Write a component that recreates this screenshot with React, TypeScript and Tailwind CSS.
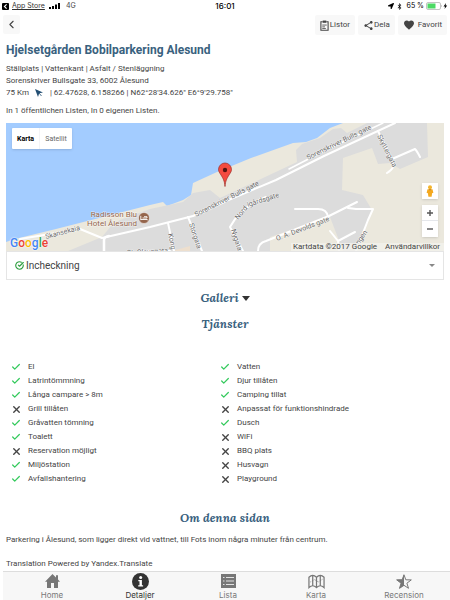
import React, { useState } from 'react';
import { FaBluetoothB, FaLocationArrow } from 'react-icons/fa';
import { MdShare, MdFavorite } from 'react-icons/md';
import { Check, X, ChevronLeft, CircleCheckBig } from 'lucide-react';

interface Service {
  name: string;
  available: boolean;
}

const leftServices: Service[] = [
  { name: 'El', available: true },
  { name: 'Latrintömmning', available: true },
  { name: 'Långa campare > 8m', available: true },
  { name: 'Grill tillåten', available: false },
  { name: 'Gråvatten tömning', available: true },
  { name: 'Toalett', available: true },
  { name: 'Reservation möjligt', available: false },
  { name: 'Miljöstation', available: true },
  { name: 'Avfallshantering', available: true },
];

const rightServices: Service[] = [
  { name: 'Vatten', available: true },
  { name: 'Djur tillåten', available: true },
  { name: 'Camping tillat', available: true },
  { name: 'Anpassat för funktionshindrade', available: false },
  { name: 'Dusch', available: true },
  { name: 'WiFi', available: false },
  { name: 'BBQ plats', available: false },
  { name: 'Husvagn', available: false },
  { name: 'Playground', available: false },
];

const StatusBar = () => (
  <div className="grid h-3 grid-cols-3 items-center px-[2px] font-['Inter',sans-serif] text-[7px] leading-3 text-black">
    <div className="flex items-center">
      <a href="#store" className="flex items-center gap-[3px]">
        <svg width="7" height="7" viewBox="0 0 7 7">
          <rect width="7" height="7" rx="1" fill="#000" />
          <path d="M4.6 1.3 2.4 3.5l2.2 2.2" fill="none" stroke="#fff" strokeWidth="1.1" />
        </svg>
        <span className="text-[#333] underline">App Store</span>
      </a>
      <svg className="ml-1" width="11" height="6" viewBox="0 0 11 6">
        <path d="M0 4h2v2H0zM3 3h2v3H3zM6 1.500h2V6H6zM9 0h2v6H9z" />
      </svg>
      <span className="ml-[6px] text-[#444]">4G</span>
    </div>
    <span className="text-center text-[8px] font-medium">16:01</span>
    <div className="flex items-center justify-end gap-[2px]">
      <FaLocationArrow size={6} />
      <FaBluetoothB size={7} />
      <span className="ml-[2px]">65 %</span>
      <svg width="22" height="8" viewBox="0 0 22 8">
        <rect x="0.5" y="0.5" width="14" height="7" rx="1.500" fill="#fff" stroke="#aaa" strokeWidth="0.7" />
        <rect x="1.500" y="1.500" width="8" height="5" fill="#4cd964" />
        <path d="M15.300 2.700v2.600c.9-.5.9-2.100 0-2.600z" fill="#aaa" />
        <path d="M20 1l-2.500 3.400h1.600L18.500 7l2.700-3.500h-1.600z" />
      </svg>
    </div>
  </div>
);

const ToolButton: React.FC<{ label: string; className?: string; children: React.ReactNode }> = ({
  label,
  className = '',
  children,
}) => (
  <button className={`flex h-5 items-center rounded-[2px] bg-[#f8f8f8] px-[5px] text-[8px] text-[#444] ${className}`}>
    {children}
    {label}
  </button>
);

const MapDrawing = () => (
  <svg className="block h-full w-full" viewBox="0 0 438 128" preserveAspectRatio="xMidYMid slice">
    <rect width="438" height="128" fill="#a3ccff" />
    <path
      d="M0 119 9 116 50 106 144 82 157 79 161 83 177 77 185 72 187 60 211 49 245 35 287 20 300 19 311 15 324 5 337 0H438V128H0z"
      fill="#ebe8dd"
    />
    <path
      d="M62 128 96 114 105 103 114 97 144 86 177 79 187 70 204 67 214 75 257 55 291 39 290 27 296 21 314 15 327 6 335 5 341 10 361 0H421L422 34 394 46 384 40 372 41 366 25 337 35 336 67 357 72 366 87 354 120 350 128H337L324 94 264 114V128z"
      fill="#dcdcdc"
    />
    <path d="M166 128 184 123v5z" fill="#eddfce" />
    <g fill="none" stroke="#fff" strokeLinecap="round" strokeLinejoin="round">
      <path d="M14 116 74 106 96 115 144 104 187 93 220 78 270 57 318 33 389 0" strokeWidth="2" />
      <path d="M283 46 320 27 377 0" strokeWidth="1.500" />
      <path d="M98 128V117q0-3 5-4" strokeWidth="2.500" />
      <path d="M162 100 168 128M182 94 196 128M260 74Q235 84 224 104L237 128M252 128q0-8 8-10L323 93 351 79M294 86h18q9 0 10 8M342 85 350 86H367L362 97 350 128M324 108 332 118 349 109M332 118 333 128" strokeWidth="2" />
      <path d="M372 8 386 37Q391 44 381 50M386 36 409 26Q411 28 414 34M289 86h5M136 128h28" strokeWidth="2" />
    </g>
    <g
      className="font-['Roboto',sans-serif]"
      fontSize="7"
      fill="#6a6a6a"
      stroke="#fff"
      strokeOpacity="0.6"
      strokeWidth="1"
      paintOrder="stroke"
    >
      <text x="40" y="116" transform="rotate(-15 40 116)">Skansekaia</text>
      <text x="190" y="94" transform="rotate(-27 190 94)">Sorenskriver Bulls gate</text>
      <text x="302" y="37" transform="rotate(-26 302 37)">Sorenskriver Bulls gate</text>
      <text x="371" y="13" transform="rotate(63 371 13)">Skyttergata</text>
      <text x="232" y="97" transform="rotate(-50 232 97)">Nord</text>
      <text x="242" y="84" transform="rotate(-18 242 84)">igårdsgate</text>
      <text x="271" y="118" transform="rotate(-21 271 118)">O. A. Devolds gate</text>
      <text x="162" y="111" transform="rotate(78 162 111)">Kong</text>
      <text x="183" y="101" transform="rotate(72 183 101)">Storgata</text>
      <text x="225" y="107" transform="rotate(72 225 107)">Nygata</text>
      <text x="353" y="122" transform="rotate(-56 353 122)">ngen</text>
      <text x="121" y="132" transform="rotate(-3 121 132)">St. Olavsgata</text>
      <g fill="#94654c" fontSize="8">
        <text x="131" y="94" textAnchor="end">Radisson Blu</text>
        <text x="131" y="103" textAnchor="end">Hotel Ålesund</text>
      </g>
    </g>
    <circle cx="138" cy="95" r="5.500" fill="#94654c" stroke="#fff" strokeWidth="0.5" />
    <path d="M134.800 92.800v4.400M134.800 96.500h6.500v.8M136.500 95h4.500v-1.300h-3" fill="none" stroke="#fff" strokeWidth="0.9" />
    <path
      d="M219 63.500c-.5-6-2-8-4-11.500-2-3-2.500-4-2.500-5.500a6.500 6.500 0 0 1 13 0c0 1.500-.5 2.500-2.500 5.500-2 3.500-3.500 5.500-4 11.500z"
      fill="#f44b40"
      stroke="#9e2b25"
      strokeWidth="0.7"
    />
    <circle cx="219" cy="47" r="2.200" fill="#541411" />
  </svg>
);

const GoogleMark = () => (
  <span
    className="font-['Roboto',sans-serif] text-[12px] leading-4 font-medium"
    style={{ textShadow: '0 0 1px #fff, 0 0 2px #fff' }}
  >
    <span className="text-[#4285f4]">G</span>
    <span className="text-[#ea4335]">o</span>
    <span className="text-[#fbbc05]">o</span>
    <span className="text-[#4285f4]">g</span>
    <span className="text-[#34a853]">l</span>
    <span className="text-[#ea4335]">e</span>
  </span>
);

const MapPanel = () => (
  <div className="relative h-32 overflow-hidden">
    <MapDrawing />
    <div className="absolute top-[5px] left-[6px] flex h-[21px] rounded-[1px] bg-white text-[7px] shadow-sm">
      <button className="w-7 border-r border-gray-100 font-bold text-black">Karta</button>
      <button className="w-8 text-[#666]">Satellit</button>
    </div>
    <div className="absolute right-[6px] bottom-[14px] flex w-4 flex-col gap-[6px]">
      <button aria-label="Street View" className="flex h-4 items-center justify-center bg-white shadow-sm">
        <svg width="8" height="12" viewBox="0 0 8 12">
          <circle cx="4" cy="2.200" r="2" fill="#f4b52d" />
          <path d="M1.500 4.200h5l.9 3.600-1.300.4-.5 3.500H2.400L1.900 8.200.6 7.800z" fill="#f4a91f" />
          <path d="M2.500 4.300h3L4 5.500z" fill="#b9781b" />
        </svg>
      </button>
      <div className="flex flex-col divide-y divide-gray-200 bg-white shadow-sm">
        <button aria-label="Zooma in" className="flex h-4 items-center justify-center">
          <svg width="6" height="6" viewBox="0 0 6 6"><path d="M3 0v6M0 3h6" stroke="#555" strokeWidth="1.400" /></svg>
        </button>
        <button aria-label="Zooma ut" className="flex h-4 items-center justify-center">
          <svg width="6" height="6" viewBox="0 0 6 6"><path d="M0 3h6" stroke="#555" strokeWidth="1.400" /></svg>
        </button>
      </div>
    </div>
    <div className="absolute bottom-0 left-1">
      <GoogleMark />
    </div>
    <div className="absolute right-0 bottom-0 flex h-2 items-center gap-2 bg-[#f2f1ec]/80 pr-1 pl-[2px] text-[8px] leading-2 text-[#444]">
      <span>Kartdata ©2017 Google</span>
      <a href="#terms">Användarvillkor</a>
    </div>
  </div>
);

const ServiceList: React.FC<{ services: Service[] }> = ({ services }) => (
  <ul className="flex-1">
    {services.map((service) => (
      <li key={service.name} className="flex h-[14px] items-center gap-[6px]">
        <span className="flex w-3 justify-center">
          {service.available ? (
            <Check size={10} strokeWidth={3} className="text-[#35ca5d]" />
          ) : (
            <X size={11} strokeWidth={3} className="text-[#444]" />
          )}
        </span>
        {service.name}
      </li>
    ))}
  </ul>
);

const tabs = [
  {
    label: 'Home',
    icon: (
      <svg width="15" height="14" viewBox="0 0 15 14" fill="currentColor">
        <path d="M7.500 0 11 3.500V1.200h2v4.300L15 7.700H13V14H9V9H6v5H2V7.700H0z" />
      </svg>
    ),
  },
  {
    label: 'Detaljer',
    icon: (
      <svg width="17" height="17" viewBox="0 0 17 17">
        <circle cx="8.500" cy="8.500" r="8.500" fill="#333" />
        <circle cx="8.700" cy="4.400" r="1.500" fill="#fff" />
        <path d="M6.300 7h3.600v5.200h1.200v1.200H6.200v-1.200h1.300V8.200H6.300z" fill="#fff" />
      </svg>
    ),
  },
  {
    label: 'Lista',
    icon: (
      <svg width="15" height="14" viewBox="0 0 15 14">
        <rect width="15" height="14" fill="currentColor" />
        <path d="M2 3.500h1.500M5 3.500h8M2 7h1.500M5 7h8M2 10.500h1.500M5 10.500h8" stroke="#eee" strokeWidth="0.9" />
      </svg>
    ),
  },
  {
    label: 'Karta',
    icon: (
      <svg width="17" height="15" viewBox="0 0 18 15" fill="none" stroke="currentColor" strokeWidth="1.300">
        <path d="M1 3Q3 1 5 1q2 0 4 2 2-2 4-2 2 0 4 2v11q-2-2-4-2-2 0-4 2-2-2-4-2-2 0-4 2zM5 1v11M9 3v11M13 1v11" />
        <path d="M2.500 8 7 5.500 11 8l4.500-3" strokeWidth="0.9" strokeDasharray="1 1" />
      </svg>
    ),
  },
  {
    label: 'Recension',
    icon: (
      <svg width="16" height="15" viewBox="0 0 16 15">
        <path
          d="M8 .8 9.800 5.800 15.300 5.900 10.900 9.200 12.500 14.300 8 11.300 3.500 14.300 5.100 9.200.7 5.900 6.200 5.800z"
          fill="none"
          stroke="currentColor"
          strokeWidth="1"
        />
        <path d="M8 .2V11.300L3.300 14.700 5.100 9.200.4 5.700 6.200 5.600z" fill="currentColor" />
      </svg>
    ),
  },
];

const TabBar = () => {
  const [active, setActive] = useState('Detaljer');

  return (
    <nav className="sticky bottom-0 mt-auto ml-[3px] flex h-[29px] border-t border-[#ddd] bg-[#f7f7f7] pr-[2px] pl-[5px] font-['Inter',sans-serif]">
      {tabs.map((tab) => (
        <button
          key={tab.label}
          onClick={() => setActive(tab.label)}
          className={`flex flex-1 flex-col items-center text-[8px] leading-[10px] ${
            active === tab.label ? 'text-[#333]' : 'text-[#777]'
          }`}
        >
          <span className="flex h-[19px] items-center justify-center">{tab.icon}</span>
          {tab.label}
        </button>
      ))}
    </nav>
  );
};

const headingClass = "text-center font-['Lora','Noto_Serif','Liberation_Serif',serif] text-[12px] leading-4 font-bold text-[#39617e] italic";

export default function App() {
  return (
    <div className="flex min-h-screen flex-col bg-white font-['Roboto',sans-serif] text-[8px] leading-3 text-[#444]">
      <StatusBar />

      <header className="flex items-start justify-between px-[3px] pt-[3px]">
        <button aria-label="Tillbaka" className="flex h-[19px] w-[17px] items-center justify-center rounded-[2px] bg-[#f8f8f8]">
          <ChevronLeft size={13} strokeWidth={2} />
        </button>
        <div className="flex gap-[3px]">
          <ToolButton label="Listor">
            <svg className="mr-[1px]" width="9" height="11" viewBox="0 0 10 12" fill="none" stroke="currentColor">
              <path d="M3 1.800H1v9.500h8V1.800H7" strokeWidth="1.200" />
              <path d="M3 .5h4v2.500H3z" fill="currentColor" stroke="none" />
              <path d="M2.500 5.500h5M2.500 7.500h3M2.500 9.300h4" strokeWidth="0.9" />
            </svg>
          </ToolButton>
          <ToolButton label="Dela">
            <MdShare size={11} />
          </ToolButton>
          <ToolButton label="Favorit" className="gap-[3px]">
            <MdFavorite size={12} />
          </ToolButton>
        </div>
      </header>

      <main className="px-[6px]">
        <h1 className="mt-[7px] font-['Roboto',sans-serif] text-[12px] leading-4 font-bold text-[#39617e]">
          Hjelsetgården Bobilparkering Alesund
        </h1>
        <div className="mt-[5px]">
          <p>Ställplats | Vattenkant | Asfalt / Stenläggning</p>
          <p>Sorenskriver Bullsgate 33, 6002 Ålesund</p>
          <p className="flex items-center">
            75 Km
            <svg className="mx-[6px]" width="9" height="8" viewBox="0 0 9 8">
              <path d="M0 0 8 3.600 4.200 4.300 3 8z" fill="#234f73" />
              <path d="M4 4 6.500 7" stroke="#234f73" strokeWidth="0.8" />
            </svg>
            <span>| 62.47628, 6.158266 | N62°28'34.626" E6°9'29.758"</span>
          </p>
          <p className="mt-[6px]">In 1 öffentlichen Listen, In 0 eigenen Listen.</p>
        </div>

        <div className="mt-[6px]">
          <MapPanel />
          <button className="flex h-[29px] w-full items-center border border-[#e5e5e5] px-2 text-[10px]">
            <CircleCheckBig size={9} strokeWidth={3} className="mr-[2px] text-[#2e9e3f]" />
            Incheckning
            <svg className="ml-auto" width="6" height="3" viewBox="0 0 6 3">
              <path d="M0 0h6L3 3z" fill="#888" />
            </svg>
          </button>
        </div>

        <h2 className={`mt-[10px] ${headingClass}`}>
          <button className="inline-flex items-center gap-[3px] italic">
            Galleri
            <svg width="8" height="5" viewBox="0 0 8 5">
              <path d="M0 0h8L4 5z" fill="#333" />
            </svg>
          </button>
        </h2>
        <h2 className={`mt-[10px] ${headingClass}`}>Tjänster</h2>

        <div className="mt-7 flex pr-4 pl-1">
          <ServiceList services={leftServices} />
          <ServiceList services={rightServices} />
        </div>

        <h2 className={`mt-6 ${headingClass}`}>Om denna sidan</h2>
        <p className="mt-2">
          Parkering i Ålesund, som ligger direkt vid vattnet, till Fots inom några minuter från centrum.
        </p>
        <p className="mt-3">Translation Powered by Yandex.Translate</p>
      </main>

      <TabBar />
    </div>
  );
}
